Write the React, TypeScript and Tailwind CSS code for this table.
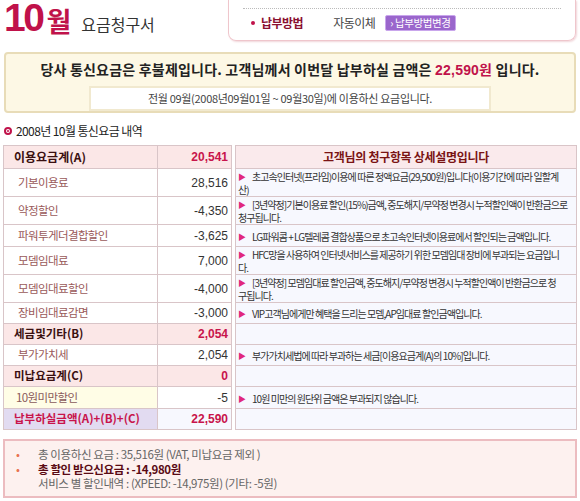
import React from 'react'

const KR = "font-['Noto_Sans_CJK_KR','Noto_Sans',sans-serif]"

type Row = {
  label: string
  value: string
  h: number
  kind: 'head' | 'sub' | 'yellow' | 'total'
  desc?: string[]
}

const rows: Row[] = [
  { label: '기본이용료', value: '28,516', h: 28, kind: 'sub', desc: ['초고속인터넷(프라임)이용에 따른 정액요금(29,500원)입니다(이용기간에 따라 일할계', '산)'] },
  { label: '약정할인', value: '-4,350', h: 28, kind: 'sub', desc: ['[3년약정]기본이용료 할인(15%)금액, 중도해지/무약정 변경시 누적할인액이 반환금으로', '청구됩니다.'] },
  { label: '파워투게더결합할인', value: '-3,625', h: 22, kind: 'sub', desc: ['LG파워콤 + LG텔레콤 결합상품으로 초고속인터넷이용료에서 할인되는 금액입니다.'] },
  { label: '모뎀임대료', value: '7,000', h: 28, kind: 'sub', desc: ['HFC망을 사용하여 인터넷서비스를 제공하기 위한 모뎀임대 장비에 부과되는 요금입니', '다.'] },
  { label: '모뎀임대료할인', value: '-4,000', h: 28, kind: 'sub', desc: ['[3년약정] 모뎀임대료 할인금액, 중도해지/무약정 변경시 누적할인액이 반환금으로 청', '구됩니다.'] },
  { label: '장비임대료감면', value: '-3,000', h: 21, kind: 'sub', desc: ['VIP고객님에게만 혜택을 드리는 모뎀,AP임대료 할인금액입니다.'] },
  { label: '세금및기타(B)', value: '2,054', h: 21, kind: 'head' },
  { label: '부가가치세', value: '2,054', h: 21, kind: 'sub', desc: ['부가가치세법에 따라 부과하는 세금[이용요금계(A)의 10%]입니다.'] },
  { label: '미납요금계(C)', value: '0', h: 21, kind: 'head' },
  { label: '10원미만할인', value: '-5', h: 22, kind: 'yellow', desc: ['10원 미만의 원단위 금액은 부과되지 않습니다.'] },
  { label: '납부하실금액(A)+(B)+(C)', value: '22,590', h: 21, kind: 'total' },
]

function Arrow() {
  return <span className="inline-block text-[#e0287d] text-[8px] mr-[6px] align-[1px] tracking-normal">▶</span>
}

function BillRow({ r }: { r: Row }) {
  const c1 =
    r.kind === 'head'
      ? 'bg-[#fbe7e7] font-bold text-[#3a1010] pl-[10px] tracking-[0px]'
      : r.kind === 'yellow'
      ? 'bg-[#fffde6] text-[#8a5a5a] pl-[12px]'
      : r.kind === 'total'
      ? 'bg-[#e2dbf1] font-bold text-[#c8144b] pl-[10px] tracking-[0px]'
      : 'bg-white text-[#9a5a5a] pl-[14px]'
  const c2 =
    r.kind === 'head'
      ? 'bg-[#fbe7e7] font-bold text-[#c8144b]'
      : r.kind === 'total'
      ? 'bg-[#f7f8fe] font-bold text-[#c8144b]'
      : 'bg-white text-[#333]'
  return (
    <div className="flex" style={{ height: r.h }}>
      <div className={`w-[155px] shrink-0 border-l border-b border-r border-[#d9c5c8] flex items-center text-[11.5px] tracking-[-0.6px] ${c1}`}>
        {r.label}
      </div>
      <div className={`w-[74px] shrink-0 border-b border-r border-[#d9c5c8] flex items-center justify-end pr-[3px] text-[12px] font-['Liberation_Sans',sans-serif] ${c2}`}>
        {r.value}
      </div>
      <div className="w-[3px] shrink-0 bg-white" />
      <div className="flex-1 min-w-0 overflow-hidden border-l border-b border-r border-[#d9c5c8] bg-[#f7f8fe] pl-[2px] pt-[1px] text-[10px] leading-[13px] text-[#333] tracking-[-0.95px] flex flex-col justify-center">
        {r.desc?.map((line, i) => (
          <div key={i} className="whitespace-nowrap">
            {i === 0 && <Arrow />}
            {line}
          </div>
        ))}
      </div>
    </div>
  )
}

export default function App() {
  return (
    <div className={`w-[580px] h-[501px] bg-white overflow-hidden ${KR}`}>
      {/* Title + payment box */}
      <div className="flex h-[48px]">
        <div className="flex items-end pl-[4px] pb-[13px] w-[224px]">
          <span className="text-[39px] leading-[34px] font-bold tracking-[-2.5px] text-[#c0124a] font-['Liberation_Sans',sans-serif]">10</span>
          <span className="text-[27px] leading-none font-bold text-[#c0124a] ml-[4px] mb-[1px]">월</span>
          <span className="text-[16px] leading-none text-[#333] ml-[10px] mb-[3px]">요금청구서</span>
        </div>
        <div className="w-[348px] h-[41px] ml-[4px] border-x border-b border-[#efc6cc] rounded-b-[8px] shadow-[1px_1px_2px_#f1d6da] px-[14px]">
          <div className="border-b border-dotted border-[#bbb] mt-[8px]" />
          <div className="flex items-center mt-[6px] h-[16px]">
            <span className="w-[4px] h-[4px] rounded-full bg-[#c0124a] ml-[8px] mr-[6px]" />
            <span className="text-[12px] font-bold text-[#8a1030] tracking-[-0.5px]">납부방법</span>
            <span className="text-[12px] text-[#444] ml-[30px] tracking-[-0.5px]">자동이체</span>
            <span className="ml-[10px] bg-[#9a66cc] border border-[#c9a6ec] rounded-[2px] text-white text-[10.5px] leading-[14px] px-[4px] tracking-[-0.4px]">› 납부방법변경</span>
          </div>
        </div>
      </div>

      {/* Banner */}
      <div className="mx-[4px] mt-[4px] h-[61px] border-2 border-[#e8dcb8] rounded-[4px] bg-[#fdf8e5] flex flex-col items-center">
        <div className="mt-[5px] text-[14px] font-bold text-[#222] tracking-[0.2px] whitespace-nowrap">
          당사 통신요금은 후불제입니다. 고객님께서 이번달 납부하실 금액은{' '}
          <span className="text-[#c0124a] font-['Liberation_Sans',sans-serif]">22,590</span>
          <span className="text-[#c0124a]">원</span> 입니다.
        </div>
        <div className="mt-[5px] w-[402px] h-[25px] bg-white border-2 border-[#f1e9cf] flex items-center justify-center text-[11px] text-[#444] tracking-[-0.3px]">
          전월 09월(2008년09월01일 ~ 09월30일)에 이용하신 요금입니다.
        </div>
      </div>

      {/* Section title */}
      <div className="flex items-center mt-[10px] ml-[4px] h-[16px]">
        <span className="w-[8px] h-[8px] rounded-full border-2 border-[#c0124a] mr-[4px] flex items-center justify-center">
          <span className="w-[2px] h-[2px] bg-[#c0124a] rounded-full" />
        </span>
        <span className="text-[12px] text-[#222] tracking-[-0.6px]">2008년 10월 통신요금 내역</span>
      </div>

      {/* Table */}
      <div className="mx-[3px] mt-[6px]">
        <div className="flex h-[24px]">
          <div className="w-[155px] shrink-0 border border-[#d9c5c8] bg-[#fbe7e7] flex items-center pl-[10px] text-[12px] font-bold text-[#3a1010]">
            이용요금계(A)
          </div>
          <div className="w-[74px] shrink-0 border-y border-r border-[#d9c5c8] bg-[#fbe7e7] flex items-center justify-end pr-[3px] text-[12px] font-bold text-[#c8144b] font-['Liberation_Sans',sans-serif]">
            20,541
          </div>
          <div className="w-[3px] shrink-0" />
          <div className="flex-1 min-w-0 border border-[#d9c5c8] bg-[#faeaec] flex items-center justify-center text-[12px] font-bold text-[#7a1414] tracking-[-0.3px]">
            고객님의 청구항목 상세설명입니다
          </div>
        </div>
        {rows.map((r) => (
          <BillRow key={r.label} r={r} />
        ))}
      </div>

      {/* Summary */}
      <div className="mx-[3px] mt-[9px] h-[59px] border-2 border-[#ecbcc0] bg-[#fdf1ef] pt-[6px] text-[11.5px] leading-[14.5px] tracking-[-0.4px]">
        <div className="flex h-[14.5px] items-center">
          <span className="w-[33px] pl-[11px] text-[#e8734f]">•</span>
          <span className="text-[#666]">총 이용하신 요금 : 35,516원 (VAT, 미납요금 제외 )</span>
        </div>
        <div className="flex h-[14.5px] items-center">
          <span className="w-[33px] pl-[11px] text-[#e8734f]">•</span>
          <span className="font-bold text-[#5a0a14]">총 할인 받으신요금 : -14,980원</span>
        </div>
        <div className="flex h-[14.5px] items-center">
          <span className="w-[33px]" />
          <span className="text-[#666]">서비스 별 할인내역 : (XPEED: -14,975원) (기타: -5원)</span>
        </div>
      </div>
    </div>
  )
}
